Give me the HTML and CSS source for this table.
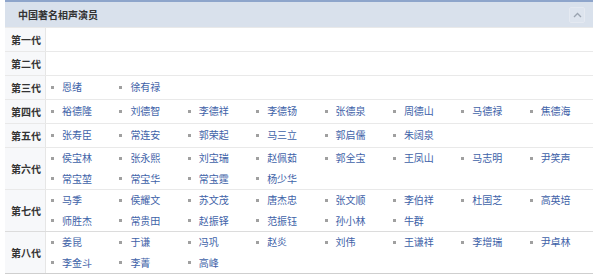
FILE: index.html
```html
<!DOCTYPE html>
<html lang="zh">
<head>
<meta charset="utf-8">
<title>中国著名相声演员</title>
<link rel="stylesheet" href="styles.css">
</head>
<body>
<div class="navbox">
  <div class="nav-head">
    <span class="nav-title">中国著名相声演员</span>
    <span class="nav-toggle"><svg width="9" height="6" viewBox="0 0 9 6"><path d="M1 5 L4.5 1.5 L8 5" fill="none" stroke="#9aa3b0" stroke-width="1.3"/></svg></span>
  </div>
  <div class="nav-row">
    <div class="nav-label">第一代</div>
    <div class="nav-cell"><ul class="names"></ul></div>
  </div>
  <div class="nav-row">
    <div class="nav-label">第二代</div>
    <div class="nav-cell"><ul class="names"></ul></div>
  </div>
  <div class="nav-row">
    <div class="nav-label">第三代</div>
    <div class="nav-cell"><ul class="names"><li>恩绪</li><li>徐有禄</li></ul></div>
  </div>
  <div class="nav-row">
    <div class="nav-label">第四代</div>
    <div class="nav-cell"><ul class="names"><li>裕德隆</li><li>刘德智</li><li>李德祥</li><li>李德钖</li><li>张德泉</li><li>周德山</li><li>马德禄</li><li>焦德海</li></ul></div>
  </div>
  <div class="nav-row">
    <div class="nav-label">第五代</div>
    <div class="nav-cell"><ul class="names"><li>张寿臣</li><li>常连安</li><li>郭荣起</li><li>马三立</li><li>郭启儒</li><li>朱阔泉</li></ul></div>
  </div>
  <div class="nav-row">
    <div class="nav-label">第六代</div>
    <div class="nav-cell"><ul class="names"><li>侯宝林</li><li>张永熙</li><li>刘宝瑞</li><li>赵佩茹</li><li>郭全宝</li><li>王凤山</li><li>马志明</li><li>尹笑声</li><li>常宝堃</li><li>常宝华</li><li>常宝霆</li><li>杨少华</li></ul></div>
  </div>
  <div class="nav-row">
    <div class="nav-label">第七代</div>
    <div class="nav-cell"><ul class="names"><li>马季</li><li>侯耀文</li><li>苏文茂</li><li>唐杰忠</li><li>张文顺</li><li>李伯祥</li><li>杜国芝</li><li>高英培</li><li>师胜杰</li><li>常贵田</li><li>赵振铎</li><li>范振钰</li><li>孙小林</li><li>牛群</li></ul></div>
  </div>
  <div class="nav-row last">
    <div class="nav-label">第八代</div>
    <div class="nav-cell"><ul class="names"><li>姜昆</li><li>于谦</li><li>冯巩</li><li>赵炎</li><li>刘伟</li><li>王谦祥</li><li>李增瑞</li><li>尹卓林</li><li>李金斗</li><li>李菁</li><li>高峰</li></ul></div>
  </div>
</div>
</body>
</html>
```

FILE: styles.css
```css
html, body {
  margin: 0;
  padding: 0;
  background: #ffffff;
}

body {
  font-family: "Noto Sans CJK SC", "Noto Sans", sans-serif;
  font-size: 10px;
  color: #333333;
}

.navbox {
  margin-left: 5px;
  width: 588px;
  border-bottom: 1px solid #cfcfcf;
}

.nav-head {
  display: flex;
  align-items: center;
  justify-content: space-between;
  height: 25px;
  background: #d9e1ec;
  border-top: 2px solid #8ea5cb;
  padding: 0 8px 0 13px;
}

.nav-title {
  font-weight: bold;
  color: #333333;
  line-height: 25px;
}

.nav-toggle {
  display: flex;
  align-items: center;
  justify-content: center;
  width: 14px;
  height: 14px;
  background: #dde4ee;
  border: 1px solid #e4e9f1;
  border-radius: 2px;
}

.nav-row {
  display: grid;
  grid-template-columns: 41px 1fr;
  border-top: 1px solid #e9e9e9;
  min-height: 23px;
}

.nav-row.last {
  border-top-color: #dcdcdc;
}

.nav-label {
  display: flex;
  align-items: center;
  padding-left: 6px;
  background: #f7f8fa;
  border-right: 1px solid #e6e6e6;
  font-weight: bold;
  color: #333333;
}

.nav-cell {
  display: flex;
  align-items: center;
}

.names {
  list-style: none;
  margin: 0;
  padding: 0;
  width: 100%;
  display: grid;
  grid-template-columns: repeat(8, 1fr);
  line-height: 20.5px;
}

.names li {
  display: flex;
  align-items: center;
  padding-left: 5px;
  color: #3e62a8;
  white-space: nowrap;
}

.names li::before {
  content: "";
  width: 3px;
  height: 3px;
  background: #a0a0a0;
  margin-right: 8px;
  flex: none;
}
```
